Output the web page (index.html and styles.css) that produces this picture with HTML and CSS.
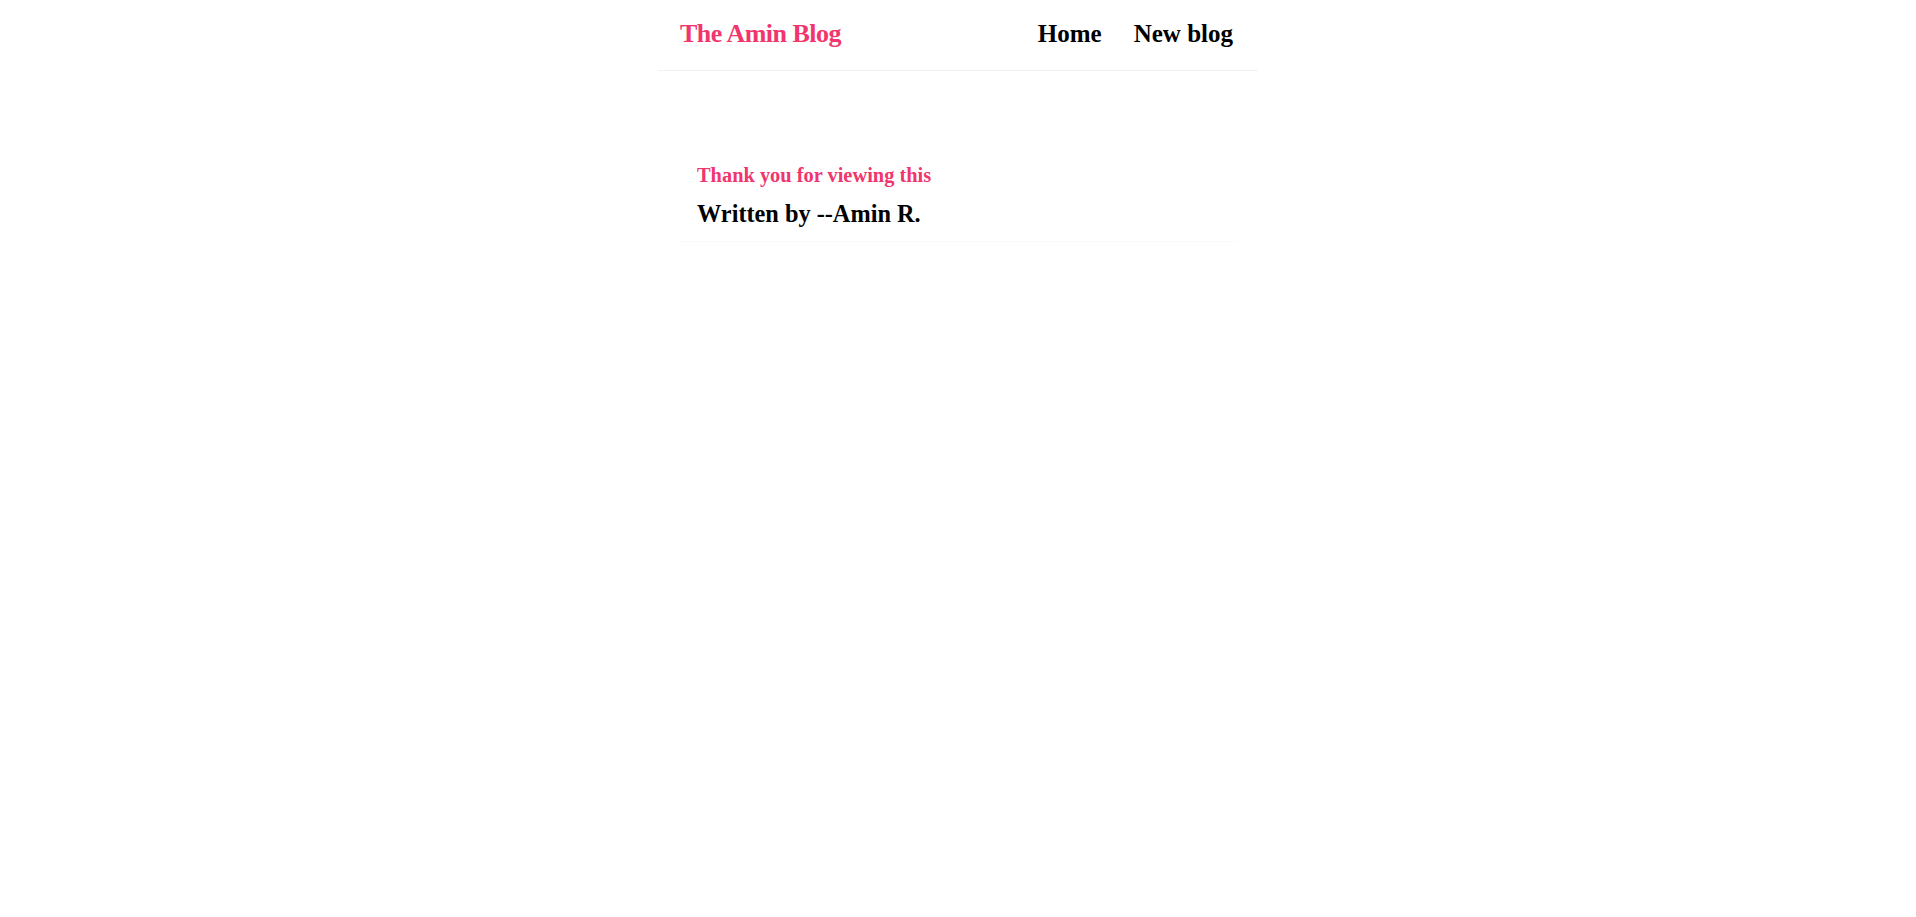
FILE: index.html
```html
<!DOCTYPE html>
<html lang="en">
<head>
<meta charset="utf-8">
<title>The Amin Blog</title>
<link rel="stylesheet" href="styles.css">
</head>
<body>
  <div class="app">
    <nav class="navbar">
      <h1 class="brand">The Amin Blog</h1>
      <div class="links">
        <a href="#" class="link">Home</a>
        <a href="#" class="link">New blog</a>
      </div>
    </nav>
    <div class="content">
      <div class="blog-preview">
        <h2 class="blog-title">Thank you for viewing this</h2>
        <p class="blog-author">Written by --Amin R.</p>
      </div>
    </div>
  </div>
</body>
</html>
```

FILE: styles.css
```css
* {
  box-sizing: border-box;
}

body {
  margin: 0;
  background: #ffffff;
  color: #000000;
  font-family: "Liberation Serif", "Times New Roman", serif;
}

.navbar {
  max-width: 600px;
  margin: 0 auto;
  padding: 19px 20px 21px 22px;
  display: flex;
  align-items: center;
  border-bottom: 1px solid #f2f2f2;
}

.brand {
  margin: 0;
  color: #f1356d;
  font-size: 26px;
  line-height: 30px;
  font-weight: bold;
  letter-spacing: -0.5px;
}

.links {
  margin-left: auto;
  display: flex;
}

.link {
  margin-left: 22px;
  padding: 0 5px;
  color: #000000;
  text-decoration: none;
  font-size: 25px;
  line-height: 30px;
  font-weight: bold;
}

.content {
  max-width: 600px;
  margin: 40px auto;
  padding: 20px;
}

.blog-preview {
  margin: 20px 0;
  padding: 10px 16px 10px 19px;
  border-bottom: 1px solid #fafafa;
}

.blog-title {
  margin: 0 0 8px;
  color: #f1356d;
  font-size: 20.4px;
  line-height: 28px;
  font-weight: bold;
}

.blog-author {
  margin: 0;
  font-size: 24.3px;
  line-height: 34px;
  font-weight: bold;
}
```
